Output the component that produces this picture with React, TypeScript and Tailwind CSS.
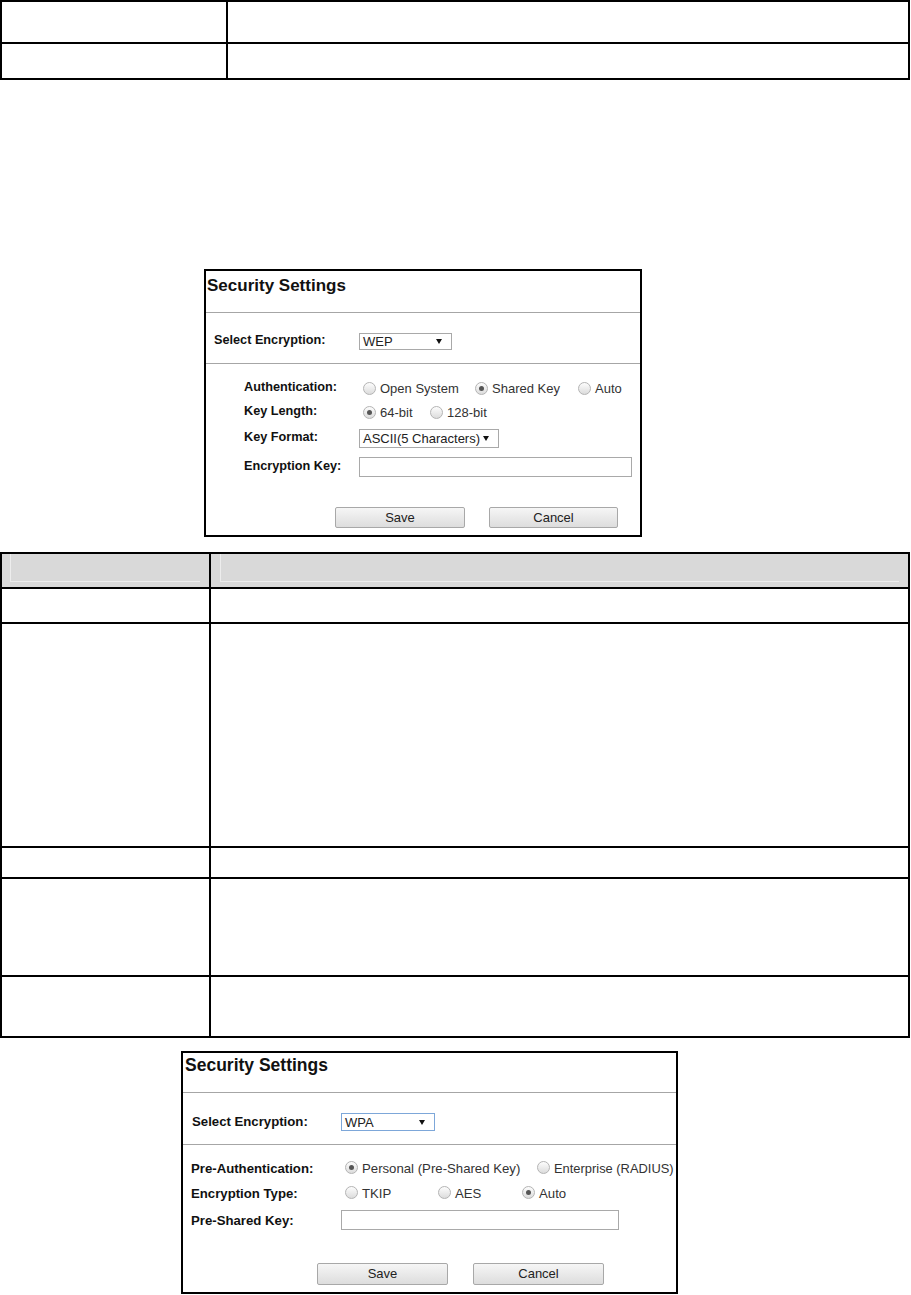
import React from "react";

function Radio({ checked }: { checked?: boolean }) {
  return (
    <span className="flex h-[13px] w-[13px] shrink-0 items-center justify-center rounded-full border border-[#b4b4b4] bg-gradient-to-b from-[#fdfdfd] to-[#dcdcdc]">
      {checked && <span className="h-[5px] w-[5px] rounded-full bg-[#555]" />}
    </span>
  );
}

function Option({
  label,
  checked,
  width,
  textSize,
}: {
  label: string;
  checked?: boolean;
  width?: string;
  textSize: string;
}) {
  return (
    <span className={`flex shrink-0 items-center whitespace-nowrap ${width ?? ""}`}>
      <Radio checked={checked} />
      <span className={`ml-[4px] pt-[2px] text-[#333] ${textSize}`}>{label}</span>
    </span>
  );
}

function Select({
  value,
  className,
}: {
  value: string;
  className: string;
}) {
  return (
    <span
      className={`flex items-center justify-between whitespace-nowrap border bg-white pl-[3px] pr-[9px] text-[13px] leading-none text-[#222] ${className}`}
    >
      <span>{value}</span>
      <svg width="6" height="5" viewBox="0 0 6 5">
        <polygon points="0,0 6,0 3,5" fill="#111" />
      </svg>
    </span>
  );
}

function Button({ label, className }: { label: string; className: string }) {
  return (
    <span
      className={`flex items-center justify-center rounded-[2px] border border-[#a8a8a8] bg-gradient-to-b from-[#f6f6f6] to-[#dddddd] text-[13px] text-[#222] ${className}`}
    >
      {label}
    </span>
  );
}

function WepBox() {
  const label = "ml-[38px] w-[115px] shrink-0 text-[12.7px] font-bold text-[#111]";
  return (
    <div className="ml-[204px] mt-[189px] h-[268px] w-[438px] border-2 border-black">
      <div className="h-[41px] pl-[1px] pt-[5px] text-[17px] font-bold leading-[20px] text-[#111]">
        Security Settings
      </div>
      <div className="h-px bg-[#a6a6a6]" />
      <div className="flex h-[50px] items-center pt-[6px]">
        <span className="ml-[8px] w-[145px] shrink-0 text-[12.7px] font-bold text-[#111]">
          Select Encryption:
        </span>
        <Select value="WEP" className="h-[17px] w-[93px] border-[#a9a9a9]" />
      </div>
      <div className="h-px bg-[#a6a6a6]" />
      <div className="pt-[12px]">
        <div className="flex h-[24px] items-center">
          <span className={label}>Authentication:</span>
          <span className="ml-[4px] flex items-center">
            <Option label="Open System" width="w-[112px]" textSize="text-[13px]" />
            <Option label="Shared Key" checked width="w-[103px]" textSize="text-[13px]" />
            <Option label="Auto" textSize="text-[13px]" />
          </span>
        </div>
        <div className="flex h-[24px] items-center">
          <span className={label}>Key Length:</span>
          <span className="ml-[4px] flex items-center">
            <Option label="64-bit" checked width="w-[67px]" textSize="text-[13px]" />
            <Option label="128-bit" textSize="text-[13px]" />
          </span>
        </div>
        <div className="flex h-[28px] items-center">
          <span className={label}>Key Format:</span>
          <Select
            value="ASCII(5 Characters)"
            className="h-[19px] w-[140px] border-[#a9a9a9]"
          />
        </div>
        <div className="flex h-[30px] items-center">
          <span className={label}>Encryption Key:</span>
          <span className="h-[20px] w-[273px] border border-[#a9a9a9] bg-white" />
        </div>
      </div>
      <div className="mt-[25px] flex">
        <Button label="Save" className="ml-[129px] h-[21px] w-[130px]" />
        <Button label="Cancel" className="ml-[24px] h-[21px] w-[129px]" />
      </div>
    </div>
  );
}

function WpaBox() {
  const label = "ml-[8px] w-[150px] shrink-0 pt-[2px] text-[13.2px] font-bold text-[#111]";
  return (
    <div className="ml-[181px] mt-[13px] h-[243px] w-[497px] border-2 border-black">
      <div className="h-[39px] pl-[2px] pt-[2px] text-[17.5px] font-bold leading-[20px] text-[#111]">
        Security Settings
      </div>
      <div className="h-px bg-[#a6a6a6]" />
      <div className="flex h-[51px] items-center pt-[7px]">
        <span className="ml-[9px] w-[149px] shrink-0 text-[13.2px] font-bold text-[#111]">
          Select Encryption:
        </span>
        <Select value="WPA" className="h-[18px] w-[94px] border-[#7da7d9]" />
      </div>
      <div className="h-px bg-[#a6a6a6]" />
      <div className="pt-[10px]">
        <div className="flex h-[26px] items-center">
          <span className={label}>Pre-Authentication:</span>
          <span className="ml-[4px] flex items-center">
            <Option
              label="Personal (Pre-Shared Key)"
              checked
              width="w-[192px]"
              textSize="text-[13.2px]"
            />
            <Option label="Enterprise (RADIUS)" textSize="text-[12.9px]" />
          </span>
        </div>
        <div className="flex h-[24px] items-center">
          <span className={label}>Encryption Type:</span>
          <span className="ml-[4px] flex items-center">
            <Option label="TKIP" width="w-[93px]" textSize="text-[13.2px]" />
            <Option label="AES" width="w-[84px]" textSize="text-[13.2px]" />
            <Option label="Auto" checked textSize="text-[13.2px]" />
          </span>
        </div>
        <div className="flex h-[30px] items-center">
          <span className={label}>Pre-Shared Key:</span>
          <span className="h-[20px] w-[278px] border border-[#a9a9a9] bg-white" />
        </div>
      </div>
      <div className="mt-[28px] flex">
        <Button label="Save" className="ml-[134px] h-[22px] w-[131px]" />
        <Button label="Cancel" className="ml-[25px] h-[22px] w-[131px]" />
      </div>
    </div>
  );
}

const rowHeights = ["h-[35px]", "h-[224px]", "h-[31px]", "h-[98px]", "h-[61px]"];

export default function App() {
  return (
    <div className="h-[1295px] w-[911px] overflow-hidden bg-white font-['Liberation_Sans',Arial,sans-serif]">
      {/* top table */}
      <div className="w-[910px] border-2 border-black">
        <div className="flex h-[40px]">
          <div className="w-[226px] border-r-2 border-black" />
          <div className="flex-1" />
        </div>
        <div className="flex h-[36px] border-t-2 border-black">
          <div className="w-[226px] border-r-2 border-black" />
          <div className="flex-1" />
        </div>
      </div>

      <WepBox />

      {/* parameter table */}
      <div className="mt-[15px] w-[910px] border-2 border-black">
        <div className="flex h-[33px] bg-[#d9d9d9]">
          <div className="w-[209px] border-r-2 border-black pb-[5px] pl-[8px] pr-[9px]">
            <div className="h-full border-b border-l border-[#ededed]" />
          </div>
          <div className="flex-1 pb-[5px] pl-[9px] pr-[9px]">
            <div className="h-full border-b border-l border-[#ededed]" />
          </div>
        </div>
        {rowHeights.map((h, i) => (
          <div key={i} className={`flex border-t-2 border-black ${h}`}>
            <div className="w-[209px] border-r-2 border-black" />
            <div className="flex-1" />
          </div>
        ))}
      </div>

      <WpaBox />
    </div>
  );
}
